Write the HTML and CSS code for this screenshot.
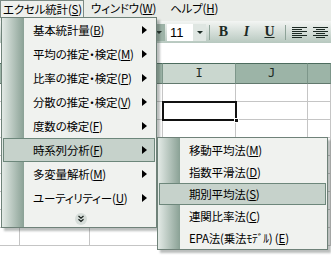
FILE: index.html
```html
<!DOCTYPE html>
<html lang="ja">
<head>
    <meta charset="UTF-8">
    <meta name="viewport" content="width=device-width, initial-scale=1.0">
    <title>エクセル統計</title>
    <link rel="stylesheet" href="styles.css">
</head>
<body>
    <div class="menubar">
        <div class="mb-item open">エクセル統計(<u>S</u>)</div>
        <div class="mb-item">ウィンドウ(<u>W</u>)</div>
        <div class="mb-item">ヘルプ(<u>H</u>)</div>
    </div>
    <div class="toolbar">
        <span class="tb-drop"><i class="down"></i></span>
        <span class="size-box">
            <span class="size-val">11</span>
            <span class="size-btn"><i class="down"></i></span>
        </span>
        <span class="tb-sep"></span>
        <span class="tb-btn tb-b">B</span>
        <span class="tb-btn tb-i">I</span>
        <span class="tb-btn tb-u">U</span>
        <span class="tb-sep wide"></span>
        <svg class="tb-icon" width="15" height="11" viewBox="0 0 15 11">
            <path d="M0 .5h15M0 2.5h10M0 4.5h15M0 6.5h10M0 8.5h15M0 10.5h10" stroke="#1c2a24" fill="none"/>
        </svg>
        <svg class="tb-icon second" width="15" height="11" viewBox="0 0 15 11">
            <path d="M0 .5h15M3 2.5h9M0 4.5h15M3 6.5h9M0 8.5h15M3 10.5h9" stroke="#1c2a24" fill="none"/>
        </svg>
    </div>
    <div class="formula"></div>
    <div class="sheet">
        <div class="hd"></div><div class="hd"></div><div class="hd">H</div><div class="hd sel">I</div><div class="hd">J</div><div class="hd"></div>
        <div class="c"></div><div class="c"></div><div class="c"></div><div class="c"></div><div class="c"></div><div class="c"></div>
        <div class="c"></div><div class="c"></div><div class="c"></div><div class="c active"></div><div class="c"></div><div class="c"></div>
        <div class="c"></div><div class="c"></div><div class="c"></div><div class="c"></div><div class="c"></div><div class="c"></div>
        <div class="c"></div><div class="c"></div><div class="c"></div><div class="c"></div><div class="c"></div><div class="c"></div>
        <div class="c"></div><div class="c"></div><div class="c"></div><div class="c"></div><div class="c"></div><div class="c"></div>
        <div class="c"></div><div class="c"></div><div class="c"></div><div class="c"></div><div class="c"></div><div class="c"></div>
        <div class="c"></div><div class="c"></div><div class="c"></div><div class="c"></div><div class="c"></div><div class="c"></div>
        <div class="c"></div><div class="c"></div><div class="c"></div><div class="c"></div><div class="c"></div><div class="c"></div>
        <div class="c"></div><div class="c"></div><div class="c"></div><div class="c"></div><div class="c"></div><div class="c"></div>
    </div>

    <div class="menu main-menu">
        <div class="mi">基本統計量(<u>B</u>)<i class="arrow"></i></div>
        <div class="mi">平均の推定・検定(<u>M</u>)<i class="arrow"></i></div>
        <div class="mi">比率の推定・検定(<u>P</u>)<i class="arrow"></i></div>
        <div class="mi">分散の推定・検定(<u>V</u>)<i class="arrow"></i></div>
        <div class="mi">度数の検定(<u>F</u>)<i class="arrow"></i></div>
        <div class="mi hot">時系列分析(<u>F</u>)<i class="arrow"></i></div>
        <div class="mi">多変量解析(<u>M</u>)<i class="arrow"></i></div>
        <div class="mi">ユーティリティー(<u>U</u>)<i class="arrow"></i></div>
        <div class="more">
            <svg width="12" height="12" viewBox="0 0 12 12">
                <circle cx="6" cy="6" r="6" fill="#d6ddd9"/>
                <path d="M3.5 3l2.5 2.2L8.5 3M3.5 6.3l2.5 2.2 2.5-2.2" fill="none" stroke="#1e2622" stroke-width="1.3"/>
            </svg>
        </div>
    </div>

    <div class="menu sub-menu">
        <div class="mi">移動平均法(<u>M</u>)</div>
        <div class="mi">指数平滑法(<u>D</u>)</div>
        <div class="mi hot">期別平均法(<u>S</u>)</div>
        <div class="mi">連関比率法(<u>C</u>)</div>
        <div class="mi">EPA法(乗法ﾓﾃﾞﾙ) (<u>E</u>)</div>
    </div>
</body>
</html>
```

FILE: styles.css
```css
body {
    margin: 0;
    width: 331px;
    height: 257px;
    overflow: hidden;
    position: relative;
    background: #fff;
    color: #000;
    font-family: "Noto Sans CJK JP", sans-serif;
    font-size: 11.5px;
    letter-spacing: -0.2px;
    font-feature-settings: "palt";
}
u {
    text-underline-offset: 1px;
}
.menubar {
    height: 21px;
    background: #e9ece8;
    display: flex;
    align-items: flex-start;
}
.mb-item {
    height: 18px;
    line-height: 17px;
    padding: 0 7px;
    box-sizing: border-box;
    white-space: nowrap;
}
.mb-item.open {
    width: 84px;
    padding: 0 2px;
    border: 1px solid #7d8b85;
    border-bottom: none;
    background: #eef0ed;
    line-height: 16px;
}
.toolbar {
    height: 22px;
    background: linear-gradient(#f3f5f3, #b7c8bf);
    display: flex;
    align-items: center;
    padding-left: 152px;
    letter-spacing: 0;
}
.down {
    display: block;
    width: 0;
    height: 0;
    border-top: 3px solid #1c2a24;
    border-left: 3px solid transparent;
    border-right: 3px solid transparent;
}
.tb-drop {
    width: 13px;
    height: 17px;
    margin-right: 2px;
    display: flex;
    align-items: center;
    justify-content: center;
    background: #9db3a7;
}
.size-box {
    display: flex;
    height: 17px;
    width: 39px;
}
.size-val {
    flex: 1;
    background: #fff;
    font-family: "Liberation Sans", sans-serif;
    font-size: 13px;
    line-height: 17px;
    padding-left: 3px;
}
.size-btn {
    width: 13px;
    display: flex;
    align-items: center;
    justify-content: center;
    background: #dfe6e2;
}
.tb-sep {
    width: 1px;
    height: 15px;
    background: #8ea398;
    margin: 0 2px 0 3px;
}
.tb-sep.wide {
    margin: 0 6px 0 4px;
}
.tb-btn {
    width: 23px;
    text-align: center;
    font-family: "Liberation Serif", serif;
    font-size: 14px;
    font-weight: bold;
    color: #1c2a24;
}
.tb-i {
    font-style: italic;
}
.tb-u {
    text-decoration: underline;
}
.tb-icon.second {
    margin-left: 6px;
}
.formula {
    height: 20px;
    background: #fff;
}
.sheet {
    display: grid;
    grid-template-columns: 20px 70px 73px 73px 72px 23px;
    grid-template-rows: 21px;
    grid-auto-rows: 18px;
}
.hd {
    box-sizing: border-box;
    border-top: 1px solid #4c6c5e;
    border-right: 1px solid #7d968a;
    border-bottom: 1px solid #62796e;
    background: #9cb4a7;
    text-align: center;
    font-family: "DejaVu Sans Mono", monospace;
    font-size: 12px;
    line-height: 19px;
    color: #1d2a24;
}
.hd.sel {
    background: #cad7cf;
}
.c {
    box-sizing: border-box;
    border-right: 1px solid #c5c5c5;
    border-bottom: 1px solid #c5c5c5;
}
.c.active {
    position: relative;
    z-index: 1;
    outline: 2px solid #111;
    outline-offset: -1px;
}
.c.active::after {
    content: "";
    position: absolute;
    right: -4px;
    bottom: -4px;
    width: 5px;
    height: 5px;
    background: #111;
    border: 1px solid #fff;
    box-sizing: border-box;
}
.menu {
    position: absolute;
    box-sizing: border-box;
    border: 1px solid #6f8279;
    padding: 0 1px 0 1px;
    background: linear-gradient(90deg, #e3eae6 0, #8aa195 22px, #f0f2ef 22px);
    box-shadow: 3px 3px 2px rgba(60, 70, 65, 0.35);
}
.main-menu {
    left: 1px;
    top: 17px;
    width: 156px;
    height: 211px;
}
.sub-menu {
    left: 157px;
    top: 137px;
    width: 171px;
    height: 113px;
    padding-top: 1px;
}
.mi {
    height: 24px;
    box-sizing: border-box;
    display: flex;
    align-items: center;
    padding: 0 7px 0 29px;
    border: 1px solid transparent;
    white-space: nowrap;
}
.sub-menu .mi {
    height: 22px;
}
.mi.hot {
    background: #c6d2cb;
    border-color: #6d877b;
}
.arrow {
    margin-left: auto;
    width: 0;
    height: 0;
    border-left: 5px solid #000;
    border-top: 4px solid transparent;
    border-bottom: 4px solid transparent;
}
.more {
    height: 17px;
    display: flex;
    align-items: center;
    justify-content: center;
    padding-left: 4px;
}
```
